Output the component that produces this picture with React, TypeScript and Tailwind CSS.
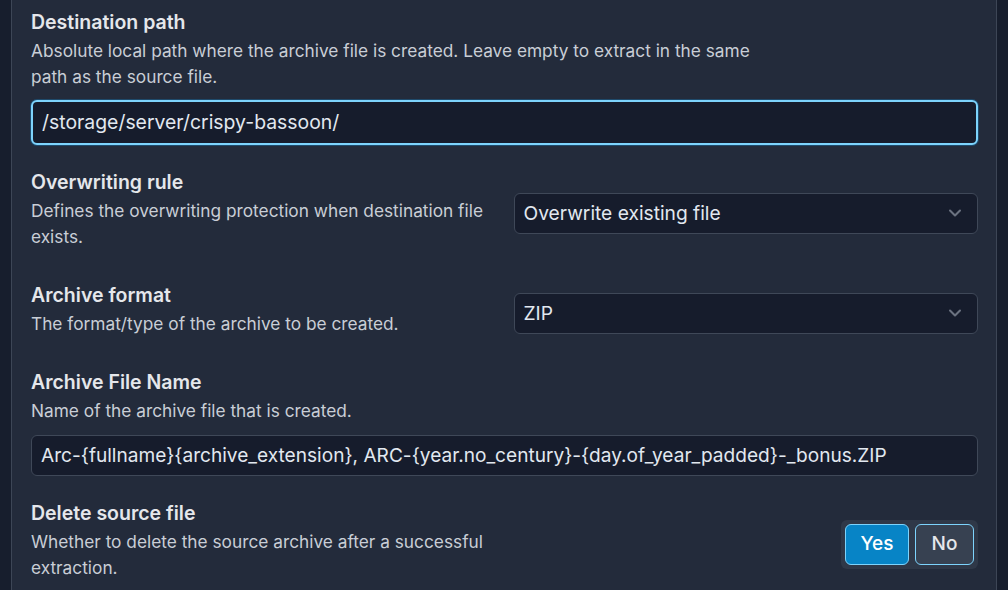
import { ChevronDown } from "lucide-react";

const FONT = { fontFamily: "Inter, 'Noto Sans', sans-serif" };

function FieldLabel({ title, desc, narrow }: { title: string; desc: string; narrow?: boolean }) {
  return (
    <div className={narrow ? "pb-2" : "max-w-[738px]"}>
      <h3 className="text-[19.5px] leading-[28px] font-semibold text-[#e5e7eb]">{title}</h3>
      <p className="mt-[2px] text-[17.3px] leading-[26px] text-[#c9ced6]">{desc}</p>
    </div>
  );
}

function SelectBox({ value }: { value: string }) {
  return (
    <div className="h-[41px] flex items-center justify-between rounded-md border border-[#3f4858] bg-[#161c2c] pl-[9px] pr-[12px]">
      <span className="text-[19.2px] text-[#e2e8f0]">{value}</span>
      <ChevronDown size={20} strokeWidth={2.5} className="text-[#6b7280]" />
    </div>
  );
}

export default function App() {
  return (
    <div className="w-[1008px] h-[590px] overflow-hidden bg-[#171e2d] pl-[11px] pr-[11px]" style={FONT}>
      <div className="h-full border-x border-[#3d4656] bg-[#232b3b] pl-[19px] pr-[18px] pt-[8px] flex flex-col gap-[23px]">
        {/* Destination path */}
        <section>
          <FieldLabel
            title="Destination path"
            desc="Absolute local path where the archive file is created. Leave empty to extract in the same path as the source file."
          />
          <div className="mt-[10px] h-[45px] flex items-center rounded-md border-2 border-[#7dd3fc] bg-[#161c2c] px-[9px] ring-1 ring-[#1e4a6b]">
            <span className="text-[19.4px] text-[#e2e8f0]">/storage/server/crispy-bassoon/</span>
          </div>
        </section>

        {/* Overwriting rule */}
        <section className="grid grid-cols-2 gap-[18px] items-center">
          <FieldLabel
            narrow
            title="Overwriting rule"
            desc="Defines the overwriting protection when destination file exists."
          />
          <SelectBox value="Overwrite existing file" />
        </section>

        {/* Archive format */}
        <section className="grid grid-cols-2 gap-[18px] items-center">
          <FieldLabel narrow title="Archive format" desc="The format/type of the archive to be created." />
          <SelectBox value="ZIP" />
        </section>

        {/* Archive file name */}
        <section>
          <FieldLabel title="Archive File Name" desc="Name of the archive file that is created." />
          <div className="mt-[11px] h-[41px] flex items-center rounded-md border border-[#3f4858] bg-[#161c2c] px-[9px]">
            <span className="text-[19.1px] text-[#e2e8f0] whitespace-nowrap">
              Arc-{"{fullname}{archive_extension}"}, ARC-{"{year.no_century}-{day.of_year_padded}"}-_bonus.ZIP
            </span>
          </div>
        </section>

        {/* Delete source file */}
        <section className="grid grid-cols-2 gap-[18px] items-center">
          <FieldLabel
            narrow
            title="Delete source file"
            desc="Whether to delete the source archive after a successful extraction."
          />
          <div className="flex justify-end">
            <div className="flex gap-[6px] rounded-md bg-[#2f3848] p-[4px]">
              <button className="h-[41px] w-[64px] rounded-md border border-[#7dd3fc] bg-[#0784c6] text-[19px] font-medium text-white">
                Yes
              </button>
              <button className="h-[41px] w-[59px] rounded-md border border-[#7dd3fc] bg-[#374151] text-[19px] font-medium text-[#e5e7eb]">
                No
              </button>
            </div>
          </div>
        </section>
      </div>
    </div>
  );
}
